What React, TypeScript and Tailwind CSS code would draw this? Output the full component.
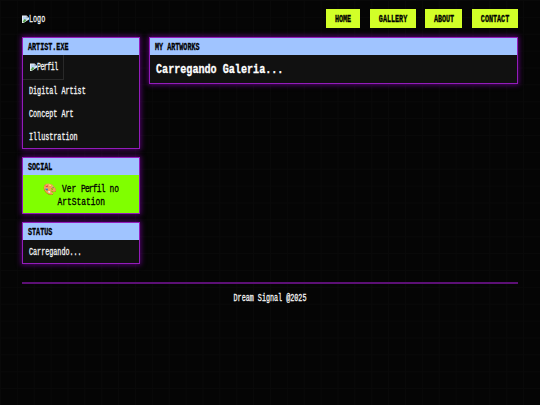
import React from 'react';

interface ITextProps {
  className?: string;
  children: React.ReactNode;
}

// Narrow terminal lettering, squeezed horizontally
const PixelText: React.FC<ITextProps> = ({ className = 'origin-left scale-x-[0.675] pt-[1.5px] text-[10px]', children }) => (
  <span className={`inline-block whitespace-nowrap [-webkit-text-stroke:0.3px_currentColor] ${className}`}>
    {children}
  </span>
);

const BrokenImage: React.FC = () => (
  <svg className="mb-[1px] h-[8px] w-[7px] shrink-0" viewBox="0 0 14 16">
    <path d="M0 1h9l5 5v3L3 16H0z" fill="#e9eef3" />
    <path d="M2 3h6l4 4-4 4H2z" fill="#b9d3f4" />
    <path d="M1 14l4-6 4 2-5 5z" fill="#4fa046" />
    <path d="M9 1v5h5z" fill="#9aa3ab" />
  </svg>
);

interface IPanelProps {
  title: string;
  className?: string;
  children: React.ReactNode;
}

const Panel: React.FC<IPanelProps> = ({ title, className = '', children }) => (
  <section
    className={`flex flex-col border border-[#931cbb] bg-[#111] shadow-[0_0_5px_1px_rgba(135,0,180,0.6)] ${className}`}
  >
    <h2 className="flex h-[17px] shrink-0 items-center bg-[#a0c4ff] pl-[5px] pt-[1px] text-black">
      <PixelText className="origin-left scale-x-[0.675] pt-[1.5px] text-[10px] font-bold">{title}</PixelText>
    </h2>
    {children}
  </section>
);

const links = [
  { label: 'HOME', width: 'w-[34px]' },
  { label: 'GALLERY', width: 'w-[46px]' },
  { label: 'ABOUT', width: 'w-[37px]' },
  { label: 'CONTACT', width: 'w-[46px]' }
];

const skills = ['Digital Artist', 'Concept Art', 'Illustration'];

const App: React.FC = () => {
  return (
    <div className="h-[405px] w-[540px] overflow-hidden bg-[#050505] bg-[linear-gradient(#090909_1px,transparent_1px),linear-gradient(90deg,#090909_1px,transparent_1px)] bg-[size:16.875px_16.875px] px-[22px] font-['Liberation_Mono',monospace] leading-none text-[#f4f4f4]">
      <header className="flex h-[37px] items-center justify-between">
        <div className="flex w-[40px] items-center pt-[1px]">
          <BrokenImage />
          <PixelText>Logo</PixelText>
        </div>
        <nav className="flex gap-[9.7px]">
          {links.map((link) => (
            <a
              key={link.label}
              className={`flex h-[19px] items-center justify-center bg-[#d2ff28] pt-[1px] text-black ${link.width}`}
            >
              <PixelText className="scale-x-[0.675] pt-[1.5px] text-[10px] font-bold">{link.label}</PixelText>
            </a>
          ))}
        </nav>
      </header>

      <main className="flex items-start gap-[8.5px]">
        <aside className="flex w-[118px] shrink-0 flex-col gap-[8px]">
          <Panel title="ARTIST.EXE" className="h-[112px]">
            <div className="flex h-[24.5px] w-[41px] shrink-0 items-center border border-l-0 border-t-0 border-[#292929] pl-[7px] pt-[1px]">
              <BrokenImage />
              <PixelText className="origin-left scale-x-[0.66] pt-[1.5px] text-[10px] tracking-[-0.08em]">Perfil</PixelText>
            </div>
            <ul className="pl-[6px] pt-[0.5px]">
              {skills.map((skill) => (
                <li key={skill} className="flex h-[22.8px] items-center">
                  <PixelText>{skill}</PixelText>
                </li>
              ))}
            </ul>
          </Panel>

          <Panel title="SOCIAL" className="h-[57px]">
            <a className="flex flex-1 flex-col items-center justify-center bg-[#80ff00] pt-[3px] text-black">
              <span className="flex h-[12.5px] w-[76px] items-center">
                <span className="w-[19px] shrink-0 font-['Noto_Color_Emoji',sans-serif] text-[11px]">🎨</span>
                <PixelText className="origin-left scale-x-[0.76] text-[10.4px]">
                  Ver <span className="tracking-[-0.1em]">Perfil</span> no
                </PixelText>
              </span>
              <span className="flex h-[12.5px] items-center">
                <PixelText className="scale-x-[0.76] text-[10.4px]">ArtStation</PixelText>
              </span>
            </a>
          </Panel>

          <Panel title="STATUS" className="h-[42px]">
            <p className="flex flex-1 items-center pl-[6px] pt-[1px]">
              <PixelText>Carregando...</PixelText>
            </p>
          </Panel>
        </aside>

        <Panel title="MY ARTWORKS" className="h-[47px] flex-1">
          <h3 className="flex flex-1 items-center pl-[6px] pt-[1px] text-white">
            <PixelText className="origin-left scale-x-[0.755] text-[13.4px] font-bold">Carregando Galeria...</PixelText>
          </h3>
        </Panel>
      </main>

      <footer className="mt-[18px] flex justify-center border-t-2 border-[#5c1075] pt-[8px]">
        <PixelText className="scale-x-[0.675] pt-[1.5px] text-[10px]">Dream Signal @2025</PixelText>
      </footer>
    </div>
  );
};

export default App;
